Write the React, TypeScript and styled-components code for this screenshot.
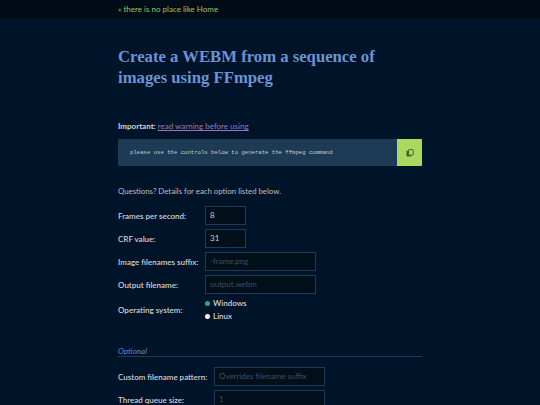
import React from "react";
import styled, { createGlobalStyle } from "styled-components";

const Global = createGlobalStyle`
  html, body { margin: 0; padding: 0; background: #001429; height: 405px; overflow: hidden; }
  body { font-family: "Lato", sans-serif; color: #c6ccd2; }
  * { box-sizing: border-box; }
`;

const TopBar = styled.nav`
  height: 19px;
  background: #010d16;
  padding-left: 118px;
  font-size: 8px;
  line-height: 19px;
  color: #98c46a;
`;

const Main = styled.main`
  width: 304px;
  margin-left: 118px;
  padding-top: 28px;
  display: flex;
  flex-direction: column;
`;

const Title = styled.h1`
  margin: 0;
  font-family: "Liberation Serif", serif;
  font-weight: 700;
  font-size: 16.7px;
  line-height: 20.5px;
  color: #6b93d6;
`;

const Important = styled.p`
  margin: 32px 0 0;
  font-size: 8px;
  line-height: 12px;
  b { color: #cfd5dc; }
`;

const WarnLink = styled.a`
  color: #9a75bb;
  text-decoration: underline;
`;

const CommandBar = styled.div`
  margin-top: 7px;
  height: 27px;
  display: flex;
  background: #1d3b54;
  border-radius: 1px;
`;

const CommandText = styled.code`
  flex: 1;
  padding-left: 12px;
  font-family: "Liberation Mono", monospace;
  font-size: 5.63px;
  line-height: 27px;
  color: #c3ccd4;
`;

const CopyButton = styled.button`
  width: 25px;
  border: 0;
  padding: 0;
  background: #a9d95f;
  border-radius: 0 1px 1px 0;
  display: flex;
  align-items: center;
  justify-content: center;
`;

const Intro = styled.p`
  margin: 19px 0 0;
  font-size: 7.8px;
  line-height: 12px;
  color: #b8bdc2;
`;

const Form = styled.div<{ $top: number }>`
  display: flex;
  flex-direction: column;
  gap: 4px;
  margin-top: ${(p) => p.$top}px;
`;

const Row = styled.div<{ $label?: number }>`
  display: grid;
  grid-template-columns: ${(p) => p.$label ?? 87}px 1fr;
  align-items: center;
  min-height: 19px;
`;

const Label = styled.label`
  font-size: 8px;
  font-weight: 600;
  color: #ccd2d8;
`;

const Field = styled.div<{ $w: number; $ph?: boolean }>`
  width: ${(p) => p.$w}px;
  height: 19px;
  border: 1px solid #1d3b54;
  background: #010f1b;
  padding-left: 4px;
  font-size: 8px;
  line-height: 17px;
  color: ${(p) => (p.$ph ? "#3d5066" : "#c6ccd2")};
`;

const Radios = styled.div`
  display: flex;
  flex-direction: column;
  gap: 2px;
`;

const Radio = styled.div`
  display: flex;
  align-items: center;
  gap: 3px;
  font-size: 8px;
  line-height: 11px;
  font-weight: 600;
  color: #ccd2d8;
`;

const Dot = styled.span<{ $on?: boolean }>`
  width: 5px;
  height: 5px;
  border-radius: 50%;
  background: ${(p) => (p.$on ? "#2fa58c" : "#f4f6f8")};
`;

const Legend = styled.div`
  margin-top: 24px;
  border-bottom: 1px solid #1d3b54;
  font-size: 8px;
  line-height: 10px;
  font-style: italic;
  color: #5c86c4;
`;

const App = () => (
  <>
    <Global />
    <TopBar>« there is no place like Home</TopBar>
    <Main>
      <Title>Create a WEBM from a sequence of images using FFmpeg</Title>
      <Important>
        <b>Important:</b> <WarnLink>read warning before using</WarnLink>
      </Important>
      <CommandBar>
        <CommandText>please use the controls below to generate the ffmpeg command</CommandText>
        <CopyButton aria-label="copy">
          <svg width="8" height="8" viewBox="0 0 8 8">
            <rect x="0.5" y="1.8" width="4.6" height="5.6" rx="0.6" fill="#3f5f2a" />
            <rect x="2.6" y="0.6" width="4.6" height="5.6" rx="0.5" fill="#a9d95f" stroke="#3f5f2a" strokeWidth="0.9" />
          </svg>
        </CopyButton>
      </CommandBar>
      <Intro>Questions? Details for each option listed below.</Intro>
      <Form $top={9}>
        <Row><Label>Frames per second:</Label><Field $w={41}>8</Field></Row>
        <Row><Label>CRF value:</Label><Field $w={41}>31</Field></Row>
        <Row><Label>Image filenames suffix:</Label><Field $w={111} $ph>-frame.png</Field></Row>
        <Row><Label>Output filename:</Label><Field $w={111} $ph>output.webm</Field></Row>
        <Row>
          <Label>Operating system:</Label>
          <Radios>
            <Radio><Dot $on />Windows</Radio>
            <Radio><Dot />Linux</Radio>
          </Radios>
        </Row>
      </Form>
      <Legend>Optional</Legend>
      <Form $top={10}>
        <Row $label={96}><Label>Custom filename pattern:</Label><Field $w={111} $ph>Overrides filename suffix</Field></Row>
        <Row $label={96}><Label>Thread queue size:</Label><Field $w={111} $ph>1</Field></Row>
      </Form>
    </Main>
  </>
);

export default App;
